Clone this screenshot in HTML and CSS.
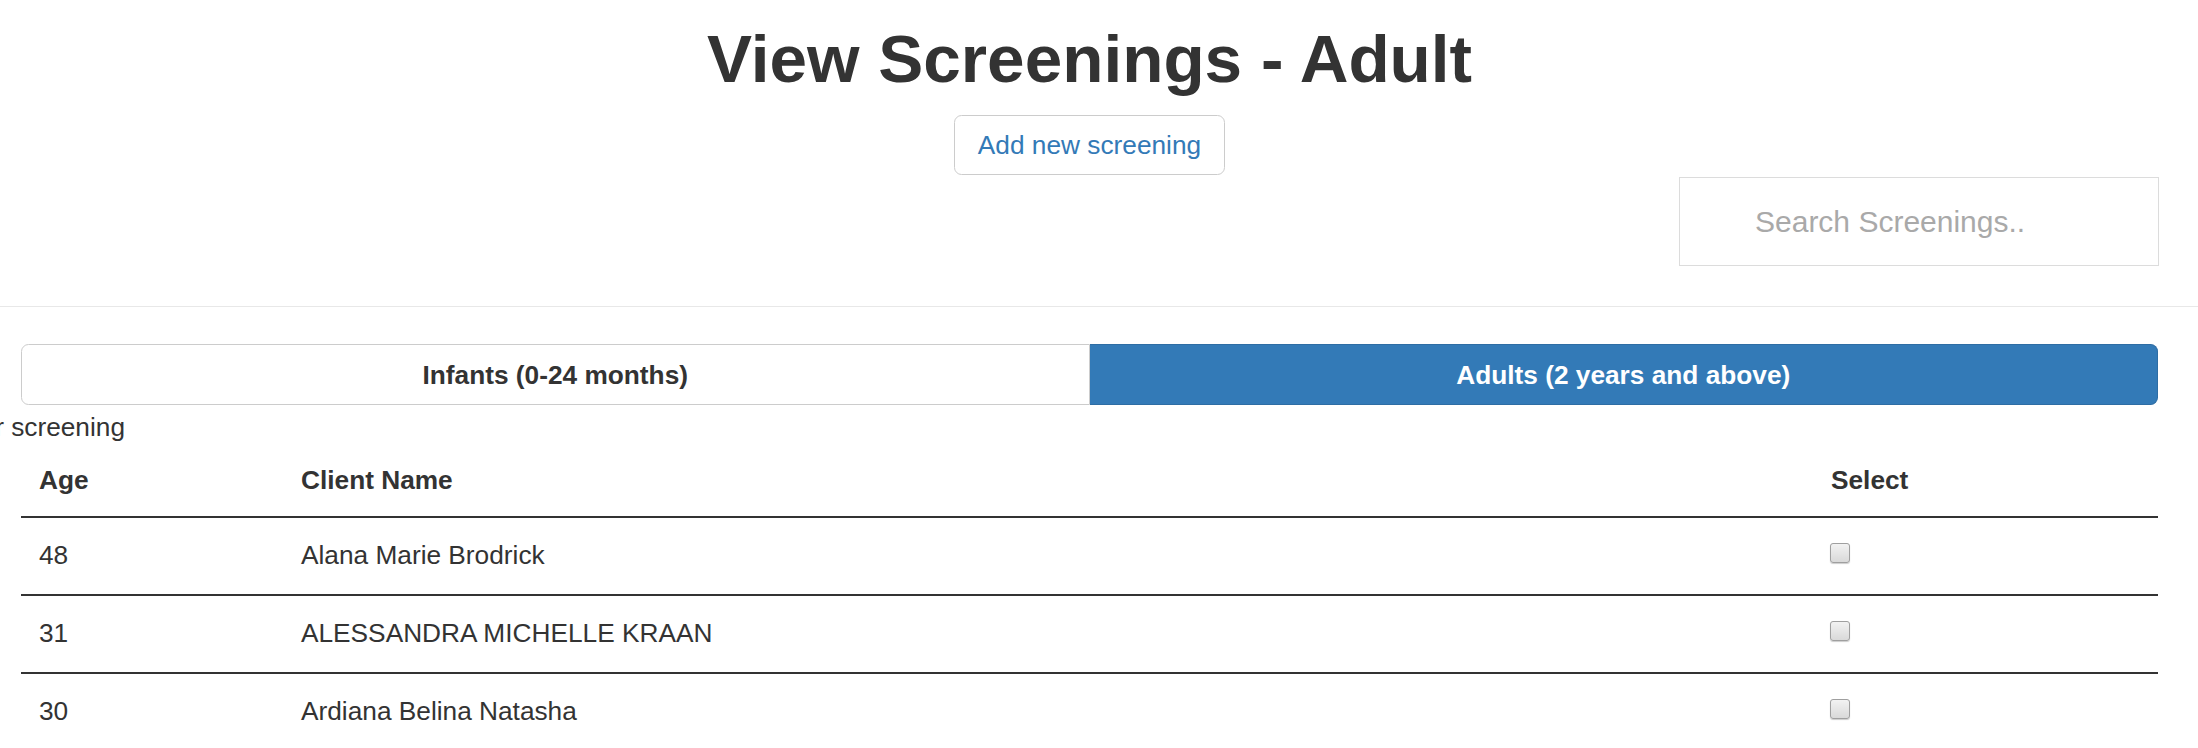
FILE: index.html
```html
<!DOCTYPE html>
<html lang="en">
<head>
<meta charset="utf-8">
<title>View Screenings - Adult</title>
<link rel="stylesheet" href="styles.css">
</head>
<body>
  <header class="page-head">
    <h1 class="title">View Screenings - Adult</h1>
    <div class="actions">
      <a class="btn-add" href="#">Add new screening</a>
    </div>
    <div class="search-row">
      <input class="search" type="text" placeholder="Search Screenings..">
    </div>
  </header>
  <hr class="divider">
  <main class="content">
    <div class="tabs">
      <button class="tab">Infants (0-24 months)</button>
      <button class="tab tab-active">Adults (2 years and above)</button>
    </div>
    <div class="hint-row"><span class="hint">Choose a client for screening</span></div>
    <table class="clients">
      <colgroup>
        <col class="c-age">
        <col class="c-name">
        <col class="c-select">
      </colgroup>
      <thead>
        <tr><th>Age</th><th>Client Name</th><th>Select</th></tr>
      </thead>
      <tbody>
        <tr><td>48</td><td>Alana Marie Brodrick</td><td><input class="check" type="checkbox"></td></tr>
        <tr><td>31</td><td>ALESSANDRA MICHELLE KRAAN</td><td><input class="check" type="checkbox"></td></tr>
        <tr><td>30</td><td>Ardiana Belina Natasha</td><td><input class="check" type="checkbox"></td></tr>
      </tbody>
    </table>
  </main>
</body>
</html>
```

FILE: styles.css
```css
html, body {
  margin: 0;
  padding: 0;
  background: #fff;
  overflow: hidden;
}

body {
  font-family: "Liberation Sans", Arial, sans-serif;
  font-size: 26.25px;
  line-height: 37.5px;
  color: #333;
}

.page-head {
  padding: 0 40px 0 21px;
}

.title {
  margin: 22px 0 0;
  font-size: 67.5px;
  line-height: 74.25px;
  font-weight: bold;
  text-align: center;
  color: #333;
}

.actions {
  margin-top: 19px;
  display: flex;
  justify-content: center;
}

.btn-add {
  display: block;
  box-sizing: border-box;
  height: 60px;
  padding: 10px 22.5px;
  line-height: 38px;
  border: 1px solid #ccc;
  border-radius: 7.5px;
  color: #337ab7;
  text-decoration: none;
  font-size: 26.25px;
  background: #fff;
}

.search-row {
  margin-top: 2px;
  display: flex;
  justify-content: flex-end;
}

.search {
  box-sizing: border-box;
  width: 480px;
  height: 89px;
  margin: 0 -1px 0 0;
  padding: 0 20px 0 75px;
  border: 1px solid #dcdcdc;
  border-radius: 0;
  font-family: "Liberation Sans", Arial, sans-serif;
  font-size: 30px;
  color: #555;
  background: #fff;
  outline: none;
}

.search::placeholder {
  color: #a9a9a9;
}

.divider {
  margin: 40px 0 0;
  border: 0;
  border-top: 1px solid #e8e8e8;
  height: 0;
}

.content {
  padding: 37px 40px 0 21px;
}

.tabs {
  display: grid;
  grid-template-columns: 1fr 1fr;
}

.tab {
  box-sizing: border-box;
  height: 61px;
  margin: 0;
  padding: 0 22px;
  border: 1px solid #ccc;
  background: #fff;
  color: #333;
  font-family: "Liberation Sans", Arial, sans-serif;
  font-size: 26.25px;
  font-weight: bold;
  line-height: 58px;
  text-align: center;
  border-radius: 7.5px 0 0 7.5px;
}

.tab-active {
  background: #337ab7;
  border-color: #2e6da4;
  color: #fff;
  border-radius: 0 7.5px 7.5px 0;
  border-left: 0;
}

.hint-row {
  height: 37.5px;
  padding-top: 4px;
  margin-left: -21px;
  overflow: hidden;
  white-space: nowrap;
}

.hint {
  display: inline-block;
  margin-left: -215px;
}

.clients {
  width: 100%;
  border-collapse: collapse;
  table-layout: fixed;
}

.c-age { width: 262px; }
.c-name { width: 1530px; }
.c-select { width: 345px; }

.clients th {
  padding: 15px 18px 16.5px;
  line-height: 37.5px;
  text-align: left;
  font-weight: bold;
  border-bottom: 2px solid #333;
  vertical-align: top;
}

.clients td {
  padding: 19px 18px 19.5px;
  line-height: 37.5px;
  vertical-align: top;
  border-bottom: 2px solid #333;
}

.clients td:last-child {
  padding-left: 17px;
}

.check {
  display: block;
  appearance: none;
  -webkit-appearance: none;
  box-sizing: border-box;
  width: 20px;
  height: 20px;
  margin: 6px 0 0;
  border: 1px solid #9f9f9f;
  border-radius: 3px;
  background: linear-gradient(#f2f2f2, #d9d9d9);
  box-shadow: 0 1px 1px rgba(0, 0, 0, 0.2);
}
```
